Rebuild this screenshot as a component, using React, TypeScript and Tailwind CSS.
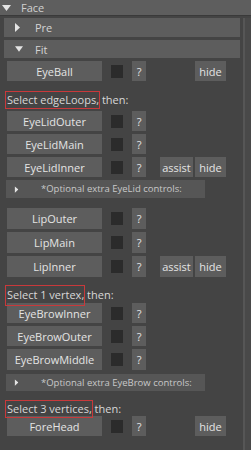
import React from "react";

const font = { fontFamily: '"Open Sans", "Noto Sans", sans-serif' };

function TriDown({ className = "" }: { className?: string }) {
  return (
    <svg width="9" height="6" viewBox="0 0 9 6" className={className}>
      <polygon points="0,0 9,0 4.5,6" fill="#e4e4e4" />
    </svg>
  );
}
function TriRight({ className = "" }: { className?: string }) {
  return (
    <svg width="5" height="9" viewBox="0 0 5 9" className={className}>
      <polygon points="0,0 5,4.5 0,9" fill="#e4e4e4" />
    </svg>
  );
}

function Btn({ children, className = "" }: { children: React.ReactNode; className?: string }) {
  return (
    <div
      className={
        "h-full bg-[#5d5d5d] text-[#e4e4e4] text-[11px] font-medium flex items-center justify-center leading-none " +
        className
      }
    >
      {children}
    </div>
  );
}

function Row({
  name,
  mode,
  h = "h-[20px]",
  mt = "mt-[3px]",
}: {
  name: string;
  mode?: "hide" | "assist";
  h?: string;
  mt?: string;
}) {
  return (
    <div className={"flex items-center " + h + " " + mt}>
      <Btn className="w-[95px]">{name}</Btn>
      <div className="ml-[9px] w-[12px] h-[13px] bg-[#2b2b2b]" />
      <Btn className="ml-[9px] w-[14px]">?</Btn>
      {mode === "assist" && (
        <>
          <Btn className="ml-[14px] w-[33px]">assist</Btn>
          <Btn className="ml-[2px] w-[31px]">hide</Btn>
        </>
      )}
      {mode === "hide" && <Btn className="ml-[49px] w-[31px]">hide</Btn>}
    </div>
  );
}

function Optional({ text, mt, h }: { text: string; mt: string; h: string }) {
  return (
    <div className={"-ml-[1px] w-[199px] bg-[#565656] flex items-center " + mt + " " + h}>
      <TriRight className="ml-[8px] scale-75" />
      <span className="ml-[22px] text-[9.5px] text-[#c8c8c8] leading-none">{text}</span>
    </div>
  );
}

function Label({
  boxed,
  rest,
  mt,
  h,
  box,
}: {
  boxed: string;
  rest: string;
  mt: string;
  h: string;
  box: string;
}) {
  return (
    <div className={"relative flex items-center " + mt + " " + h}>
      <span className="relative inline-block text-[11px] text-[#d8d8d8] leading-[12px] whitespace-pre">
        {boxed}
        <span
          className={"absolute -left-[2px] -right-[1px] border border-[#c8393b] pointer-events-none " + box}
        />
      </span>
      <span className="text-[11px] text-[#d8d8d8] leading-[12px] whitespace-pre">{rest}</span>
    </div>
  );
}

export default function App() {
  return (
    <div className="w-[251px] h-[450px] bg-[#444444] flex flex-col overflow-hidden" style={font}>
      <div className="h-[16px] bg-[#5e5e5e] border-b border-[#3a3a3a] flex items-center shrink-0">
        <TriDown className="ml-[2px]" />
        <span className="ml-[10px] text-[11px] font-medium text-[#d0d0d0] leading-none">Face</span>
      </div>
      <div className="flex flex-1">
        <div className="flex-1 pl-[4px] pr-[3px]">
          <div className="mt-[2px] h-[19px] bg-[#5d5d5d] flex items-center">
            <TriRight className="ml-[11px]" />
            <span className="ml-[15px] text-[11px] font-medium text-[#d4d4d4] leading-none">Pre</span>
          </div>
          <div className="mt-[3px] h-[18px] bg-[#5d5d5d] flex items-center">
            <TriDown className="ml-[11px] w-[8px]" />
            <span className="ml-[12px] text-[11px] font-medium text-[#d4d4d4] leading-none">Fit</span>
          </div>
          <div className="ml-[3px]">
            <Row name="EyeBall" mode="hide" />
            <Label boxed="Select edgeLoops," rest=" then:" mt="mt-[10px]" h="h-[17px]" box="-top-[3px] -bottom-[3px]" />
            <Row name="EyeLidOuter" />
            <Row name="EyeLidMain" />
            <Row name="EyeLidInner" mode="assist" />
            <Optional text="*Optional extra EyeLid controls:" mt="mt-[3px]" h="h-[18px]" />
            <Row name="LipOuter" mt="mt-[10px]" h="h-[21px]" />
            <Row name="LipMain" h="h-[21px]" />
            <Row name="LipInner" mode="assist" h="h-[21px]" />
            <Label boxed="Select 1 vertex," rest=" then:" mt="mt-[10px]" h="h-[16px]" box="-top-[4px] -bottom-[5px]" />
            <Row name="EyeBrowInner" mt="mt-0" />
            <Row name="EyeBrowOuter" />
            <Row name="EyeBrowMiddle" h="h-[21px]" />
            <Optional text="*Optional extra EyeBrow controls:" mt="mt-[4px]" h="h-[17px]" />
            <Label boxed="Select 3 vertices," rest=" then:" mt="mt-[10px]" h="h-[15px]" box="-top-[3px] -bottom-[3px]" />
            <Row name="ForeHead" mode="hide" mt="mt-0" />
          </div>
        </div>
        <div className="w-[8px] mt-[2px] border-l-[2px] border-[#565656] bg-[#494949]" />
      </div>
    </div>
  );
}
